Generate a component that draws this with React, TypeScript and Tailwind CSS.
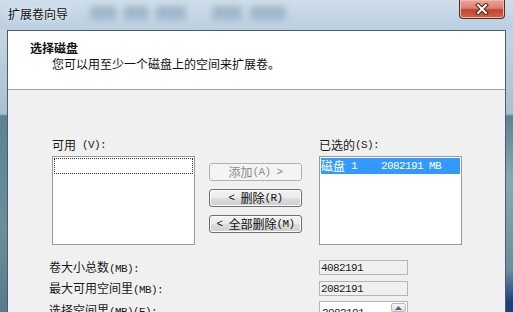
import React from "react";

const CJK = /([\u3000-\u303f\u4e00-\u9fff\uff00-\uffef]+)/;

function Mix({ t }: { t: string }) {
  const parts = t.split(CJK).filter((p) => p.length > 0);
  return (
    <>
      {parts.map((p, i) =>
        CJK.test(p) ? (
          <span key={i} className="font-['Noto_Sans_CJK_SC'] text-[12px]">
            {p}
          </span>
        ) : (
          <span
            key={i}
            className="font-['Liberation_Mono'] text-[11px] tracking-[-0.6px] whitespace-pre"
          >
            {p}
          </span>
        )
      )}
    </>
  );
}

function Btn({ label, disabled }: { label: string; disabled?: boolean }) {
  return (
    <div
      className={
        disabled
          ? "h-[18px] w-[93px] rounded-[3px] border border-[#adb2b5] bg-[#f4f4f4] text-[#8a8a8a] flex items-center justify-center leading-[14px]"
          : "h-[18px] w-[93px] rounded-[3px] border border-[#707070] bg-[linear-gradient(#f2f2f2_0%,#ebebeb_50%,#dddddd_51%,#cfcfcf_100%)] text-[#111] flex items-center justify-center leading-[14px] shadow-[inset_0_0_0_1px_#fcfcfc]"
      }
    >
      <Mix t={label} />
    </div>
  );
}

export default function App() {
  return (
    <div className="w-[513px] h-[312px] overflow-hidden flex flex-col bg-[#bcd1e2] text-[#1a1a1a]">
      {/* title bar */}
      <div className="h-[30px] flex items-start bg-[linear-gradient(#cfdeea,#b9cfe1)] shrink-0">
        <div className="pl-[8px] pt-[5px] leading-[18px] text-[12px] font-['Noto_Sans_CJK_SC'] text-[#111] [text-shadow:0_0_6px_#ffffff]">
          扩展卷向导
        </div>
        <div className="flex items-center gap-[8px] ml-[22px] mt-[6px] opacity-60">
          <span className="w-[26px] h-[14px] bg-[#8aa3b8] blur-[3px]" />
          <span className="w-[24px] h-[14px] bg-[#8aa3b8] blur-[3px]" />
          <span className="w-[30px] h-[14px] bg-[#8aa3b8] blur-[3px]" />
          <span className="w-[10px] h-[14px]" />
          <span className="w-[30px] h-[14px] bg-[#8aa3b8] blur-[3px]" />
          <span className="w-[36px] h-[14px] bg-[#8aa3b8] blur-[3px]" />
        </div>
        <div className="ml-auto mr-[8px] w-[46px] h-[19px] rounded-b-[4px] border border-t-0 border-[#5b2a24] bg-[linear-gradient(#eaa698_0%,#d9826f_45%,#c2442f_55%,#d06450_100%)] flex items-center justify-center shadow-[inset_0_0_0_1px_#f0b8ab]">
          <svg width="14" height="12" viewBox="0 0 14 12">
            <path d="M3 2 L11 10 M11 2 L3 10" stroke="#4a1e18" strokeWidth="4" strokeLinecap="square" />
            <path d="M3 2 L11 10 M11 2 L3 10" stroke="#ffffff" strokeWidth="2" strokeLinecap="square" />
          </svg>
        </div>
      </div>

      {/* body row */}
      <div className="flex flex-1 min-h-0">
        <div className="w-[7px] shrink-0 bg-[linear-gradient(#c4d6e4_0px,#a7bfce_84px,#5d8292_86px,#6a8e9c_200px,#587b8b_282px)]" />
        <div className="w-[499px] shrink-0 border border-b-0 border-[#4b5c6a] flex flex-col bg-[#f0f0f0]">
          {/* header */}
          <div className="h-[58px] bg-white border-b border-[#a0a0a0] shrink-0 box-content">
            <div className="pl-[22px] pt-[9px] leading-[16px] text-[12px] font-bold font-['Noto_Sans_CJK_SC'] text-[#111]">
              选择磁盘
            </div>
            <div className="pl-[44px] pt-[0px] leading-[16px] text-[12px] font-['Noto_Sans_CJK_SC'] text-[#111]">
              您可以用至少一个磁盘上的空间来扩展卷。
            </div>
          </div>

          {/* main */}
          <div className="flex flex-col pt-[48px] leading-[14px]">
            <div className="flex items-start pl-[44px]">
              <div className="w-[143px] flex flex-col">
                <div className="h-[14px] mb-[4px] flex items-center">
                  <Mix t="可用 (V):" />
                </div>
                <div className="h-[89px] border border-[#9a9a9a] bg-white p-[1px]">
                  <div className="h-[16px] border border-dotted border-[#333]" />
                </div>
              </div>
              <div className="ml-[14px] pt-[25px] flex flex-col gap-[8px]">
                <Btn label="添加(A) >" disabled />
                <Btn label="< 删除(R)" />
                <Btn label="< 全部删除(M)" />
              </div>
              <div className="ml-[17px] w-[143px] flex flex-col">
                <div className="h-[14px] mb-[4px] flex items-center">
                  <Mix t="已选的(S):" />
                </div>
                <div className="h-[89px] border border-[#9a9a9a] bg-white p-[1px]">
                  <div className="h-[16px] bg-[#3399ff] text-white flex items-center">
                    <Mix t="磁盘 1    2082191 MB" />
                  </div>
                </div>
              </div>
            </div>

            <div className="flex flex-col pl-[41px] mt-[15px]">
              <div className="flex items-center h-[15px]">
                <div className="w-[270px]">
                  <Mix t="卷大小总数(MB):" />
                </div>
                <div className="w-[89px] h-[15px] border border-[#b5b5b5] bg-[#f0f0f0] pl-[1px] flex items-center">
                  <Mix t="4082191" />
                </div>
              </div>
              <div className="flex items-center h-[15px] mt-[6px]">
                <div className="w-[270px]">
                  <Mix t="最大可用空间里(MB):" />
                </div>
                <div className="w-[89px] h-[15px] border border-[#b5b5b5] bg-[#f0f0f0] pl-[1px] flex items-center">
                  <Mix t="2082191" />
                </div>
              </div>
              <div className="flex items-start h-[15px] mt-[5px]">
                <div className="w-[270px] pt-[1px]">
                  <Mix t="选择空间里(MB)(E):" />
                </div>
                <div className="w-[89px] h-[20px] border border-[#b5b5b5] bg-white flex items-start">
                  <div className="flex-1 pl-[2px] pt-[1px]">
                    <Mix t="2082191" />
                  </div>
                  <div className="w-[15px] h-[9px] mt-[1px] mr-[1px] border border-[#b9b9b9] rounded-[2px] bg-[linear-gradient(#f6f6f6,#dedede)] flex items-center justify-center">
                    <svg width="7" height="4" viewBox="0 0 7 4">
                      <path d="M0 4 L3.5 0 L7 4 Z" fill="#4d6185" />
                    </svg>
                  </div>
                </div>
              </div>
            </div>
          </div>
        </div>
        <div className="w-[7px] shrink-0 bg-[linear-gradient(#c4d6e4_0px,#a7bfce_84px,#5d8292_86px,#8aa8b2_150px,#6a8e9c_240px,#1f3f7a_272px)]" />
      </div>
    </div>
  );
}
